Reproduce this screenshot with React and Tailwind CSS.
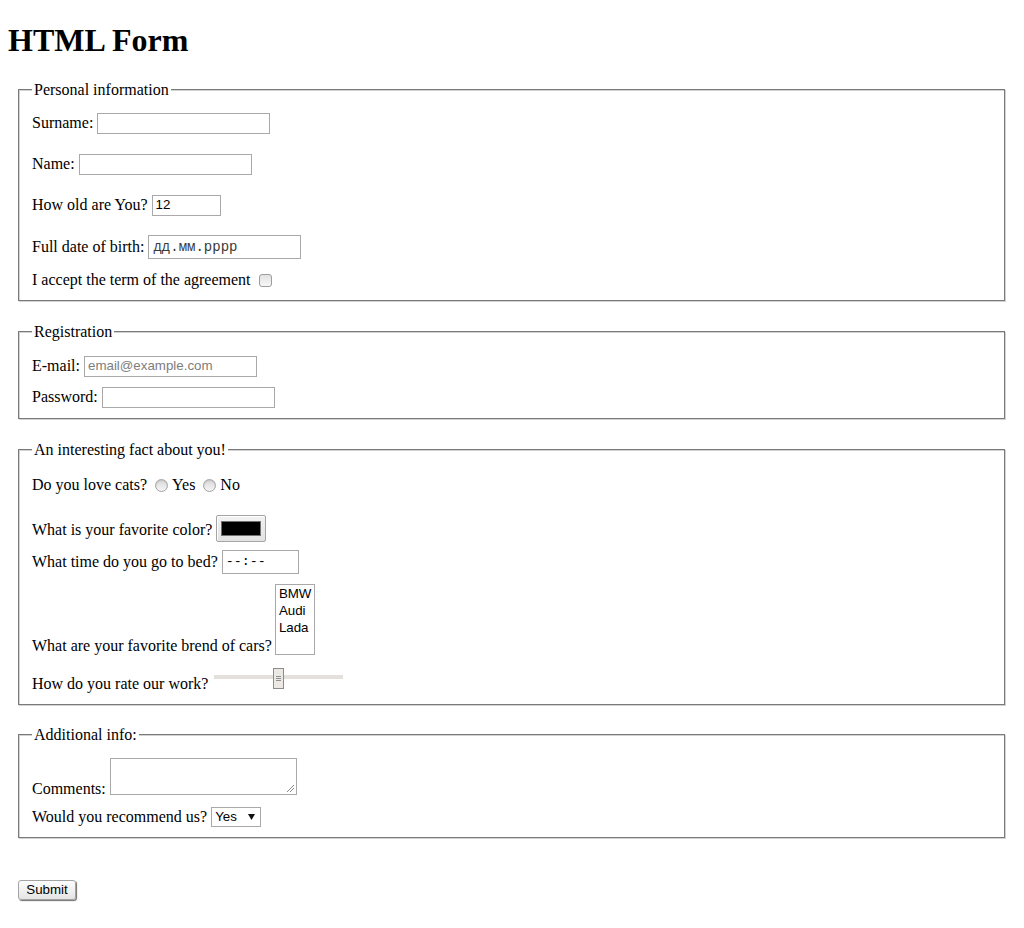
import React from "react";

function Fieldset({ legend, className, children }) {
  return (
    <div
      className={`ml-[10px] mr-[11px] border border-[#7a7a7a] shadow-[inset_1px_1px_0_#d2d2d2,1px_1px_0_#d2d2d2] pl-[13px] pr-[13px] ${className}`}
    >
      <div className="-mt-[10px] w-fit bg-white px-[2px] leading-[19px]">{legend}</div>
      {children}
    </div>
  );
}

function TextBox({ width, value, placeholder, className = "" }) {
  return (
    <div
      className={`ml-[4px] flex h-[21px] items-center border border-[#a9a9a9] bg-white pl-[3px] font-['Liberation_Sans',Arial,sans-serif] text-[13.33px] leading-[16px] ${width} ${className}`}
    >
      {value ? <span className="text-black">{value}</span> : null}
      {placeholder ? <span className="text-[#7d7d7d]">{placeholder}</span> : null}
    </div>
  );
}

function Radio({ className = "" }) {
  return (
    <span
      className={`inline-block h-[13px] w-[13px] rounded-full border border-[#a3a3a3] bg-linear-to-b from-[#d9d9d9] to-[#f5f5f5] shadow-[inset_0_1px_1px_#c4c4c4] ${className}`}
    />
  );
}

export default function App() {
  return (
    <div className="min-h-[928px] bg-white px-[8px] font-['Liberation_Serif','Times_New_Roman',serif] text-[16px] text-black">
      <h1 className="mt-[22px] text-[32px] font-bold leading-[37px]">HTML Form</h1>

      <Fieldset legend="Personal information" className="mt-[30px] pb-[8px]">
        <div className="mt-[12px] flex h-[24px] items-center">
          <span className="leading-[18px]">Surname:</span>
          <TextBox width="w-[173px]" />
        </div>
        <div className="mt-[17px] flex h-[24px] items-center">
          <span className="leading-[18px]">Name:</span>
          <TextBox width="w-[173px]" />
        </div>
        <div className="mt-[17px] flex h-[24px] items-center">
          <span className="leading-[18px]">How old are You?</span>
          <TextBox width="w-[69px]" value="12" />
        </div>
        <div className="mt-[18px] flex h-[24px] items-center">
          <span className="leading-[18px]">Full date of birth:</span>
          <div className="ml-[4px] flex h-[24px] w-[153px] items-center border border-[#a9a9a9] pl-[4px] font-['Liberation_Mono','Courier_New',monospace] text-[14px] leading-[16px] text-[#3a3a3a]">
            дд.мм.рррр
          </div>
        </div>
        <div className="mt-[9px] flex h-[24px] items-center">
          <span className="leading-[18px]">I accept the term of the agreement</span>
          <span className="ml-[8px] inline-block h-[13px] w-[13px] rounded-[3px] border border-[#9c9c9c] bg-linear-to-b from-[#e2e2e2] to-[#f7f7f7]" />
        </div>
      </Fieldset>

      <Fieldset legend="Registration" className="mt-[30px] pb-[9px]">
        <div className="mt-[13px] flex h-[24px] items-center">
          <span className="leading-[18px]">E-mail:</span>
          <TextBox width="w-[173px]" placeholder="email@example.com" />
        </div>
        <div className="mt-[7px] flex h-[24px] items-center">
          <span className="leading-[18px]">Password:</span>
          <TextBox width="w-[173px]" />
        </div>
      </Fieldset>

      <Fieldset legend="An interesting fact about you!" className="mt-[30px] pb-[8px]">
        <div className="mt-[14px] flex h-[24px] items-center">
          <span className="leading-[18px]">Do you love cats?</span>
          <Radio className="ml-[8px]" />
          <span className="ml-[4px] leading-[18px]">Yes</span>
          <Radio className="ml-[8px]" />
          <span className="ml-[4px] leading-[18px]">No</span>
        </div>
        <div className="mt-[18px] flex h-[27px] items-center">
          <span className="pt-[3px] leading-[18px]">What is your favorite color?</span>
          <div className="ml-[4px] flex h-[27px] w-[50px] items-center justify-center rounded-[2px] border border-[#a4a4a4] bg-linear-to-b from-[#f2f2f2] to-[#e2e2e2] shadow-[inset_1px_1px_0_#ffffff]">
            <span className="block h-[15px] w-[40px] border border-[#707070] bg-black" />
          </div>
        </div>
        <div className="mt-[8px] flex h-[24px] items-center">
          <span className="leading-[18px]">What time do you go to bed?</span>
          <div className="ml-[4px] flex h-[24px] w-[77px] items-center border border-[#a9a9a9] pl-[3px] font-['Liberation_Mono','Courier_New',monospace] text-[13.33px] leading-[16px] text-black">
            --:--
          </div>
        </div>
        <div className="mt-[10px] flex h-[71px] items-end">
          <span className="leading-[18px]">What are your favorite brend of cars?</span>
          <div className="ml-[3px] h-[71px] w-[40px] overflow-hidden border border-[#a9a9a9] pl-[3px] font-['Liberation_Sans',Arial,sans-serif] text-[13.33px] leading-[17px]">
            <div>BMW</div>
            <div>Audi</div>
            <div>Lada</div>
          </div>
        </div>
        <div className="mt-[11px] flex h-[30px] items-end">
          <span className="leading-[24px]">How do you rate our work?</span>
          <svg className="mb-[7px] ml-[6px] block" width="129" height="21" viewBox="0 0 129 21">
            <rect x="0" y="7" width="129" height="4" fill="#e4e1dc" />
            <rect x="59.5" y="0.5" width="10" height="20" fill="#ece9e5" stroke="#8c8c8c" />
            <line x1="62" y1="8.5" x2="67" y2="8.5" stroke="#8e8e8e" />
            <line x1="62" y1="10.5" x2="67" y2="10.5" stroke="#8e8e8e" />
            <line x1="62" y1="12.5" x2="67" y2="12.5" stroke="#8e8e8e" />
          </svg>
        </div>
      </Fieldset>

      <Fieldset legend="Additional info:" className="mt-[29px] pb-[8px]">
        <div className="mt-[14px] flex h-[40px] items-end">
          <span className="leading-[18px]">Comments:</span>
          <div className="relative mb-[3px] ml-[4px] h-[37px] w-[187px] border border-[#a9a9a9] bg-white">
            <svg className="absolute bottom-[1px] right-[1px]" width="10" height="10" viewBox="0 0 10 10">
              <line x1="2" y1="9" x2="9" y2="2" stroke="#8a8a8a" />
              <line x1="5" y1="9" x2="9" y2="5" stroke="#8a8a8a" />
            </svg>
          </div>
        </div>
        <div className="mt-[7px] flex h-[24px] items-center">
          <span className="leading-[18px]">Would you recommend us?</span>
          <div className="ml-[4px] flex h-[20px] w-[50px] items-center border border-[#a9a9a9] pl-[3px] font-['Liberation_Sans',Arial,sans-serif] text-[13.33px] leading-[16px]">
            <span>Yes</span>
            <svg className="ml-auto mr-[5px] block" width="7" height="6" viewBox="0 0 7 6">
              <polygon points="0,0 7,0 3.5,6" fill="#111" />
            </svg>
          </div>
        </div>
      </Fieldset>

      <div className="ml-[10px] mt-[42px]">
        <div className="flex h-[20px] w-[58px] items-center justify-center rounded-[3px] border border-[#a3a3a3] bg-linear-to-b from-[#fefefe] to-[#e4e4e4] font-['Liberation_Sans',Arial,sans-serif] text-[13.33px] leading-[16px] text-black shadow-[1px_1px_1px_#6e6e6e]">
          Submit
        </div>
      </div>
    </div>
  );
}
